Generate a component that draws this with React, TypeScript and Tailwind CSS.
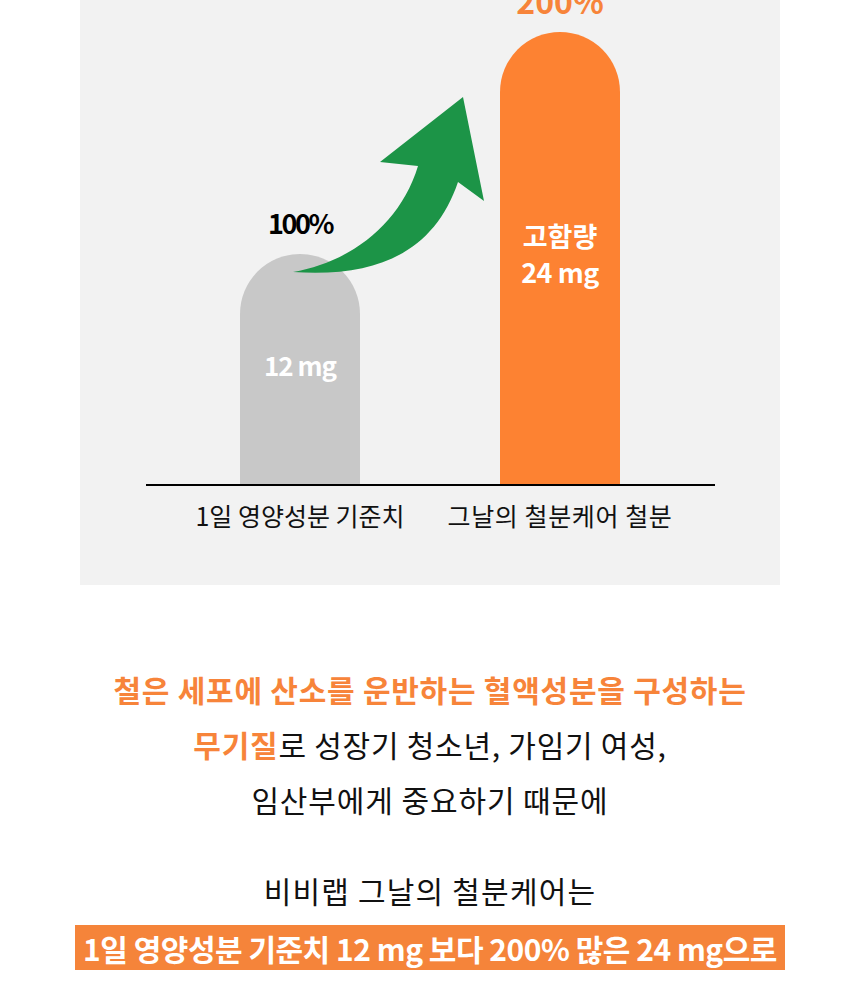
import React from 'react';

const font = "font-['Noto_Sans_CJK_KR','Noto_Sans',sans-serif]";

function Arrow() {
  return (
    <svg
      className="absolute left-0 top-0 pointer-events-none"
      width={700}
      height={585}
      viewBox="0 0 700 585"
    >
      <path
        d="M383 97 L404 201 L378 182 C355 250 300 278 213 272 C270 262 320 225 338 166 L300 162 Z"
        fill="#1c9447"
      />
    </svg>
  );
}

function Chart() {
  return (
    <div className="relative w-[700px] h-[585px] mx-auto bg-[#f2f2f2]">
      <div className="flex flex-col">
        <div className="h-[484px] flex items-end pl-[160px] gap-[140px]">
          <div className="w-[120px] flex flex-col items-center">
            <div className="text-[27px] leading-none font-bold tracking-[-2.5px] text-black mb-[18px]">100%</div>
            <div className="w-[120px] h-[230px] rounded-t-full bg-[#c8c8c8] flex flex-col items-center pt-[98px]">
              <div className="text-[26px] leading-none font-bold tracking-[-1px] text-white">12 mg</div>
            </div>
          </div>
          <div className="w-[120px] flex flex-col items-center">
            <div className="text-[32px] leading-none font-bold text-[#f7843a] mb-[16px]">200%</div>
            <div className="w-[120px] h-[452px] rounded-t-full bg-[#fd8232] flex flex-col items-center pt-[190px]">
              <div className="text-[27px] leading-none font-bold text-white">고함량</div>
              <div className="text-[27px] leading-none font-bold tracking-[-0.5px] text-white mt-[9px]">24 mg</div>
            </div>
          </div>
        </div>
        <div className="ml-[66px] w-[569px] border-t-2 border-black" />
        <div className="flex pl-[160px] gap-[140px] mt-[17px]">
          <div className="w-[120px] flex justify-center">
            <span className="whitespace-nowrap text-[25px] leading-none text-[#111]">1일 영양성분 기준치</span>
          </div>
          <div className="w-[120px] flex justify-center">
            <span className="whitespace-nowrap text-[25px] leading-none tracking-[0.6px] text-[#111]">그날의 철분케어 철분</span>
          </div>
        </div>
      </div>
      <Arrow />
    </div>
  );
}

export default function App() {
  return (
    <div className={`${font} bg-white w-[860px] min-h-[982px] overflow-hidden`}>
      <Chart />
      <div className="flex flex-col items-center text-center text-[30px] leading-[55px] text-[#111] pt-[77px]">
        <p className="font-bold text-[#f7843a] tracking-[0.75px] whitespace-nowrap">
          철은 세포에 산소를 운반하는 혈액성분을 구성하는
        </p>
        <p className="tracking-[0.75px] whitespace-nowrap">
          <span className="font-bold text-[#f7843a]">무기질</span>로 성장기 청소년, 가임기 여성,
        </p>
        <p className="tracking-[0.9px] whitespace-nowrap">임산부에게 중요하기 때문에</p>
        <p className="tracking-[1.2px] whitespace-nowrap mt-[36px]">비비랩 그날의 철분케어는</p>
        <div className="mt-[7px] w-[710px] h-[45px] bg-[#f5843a] flex items-center justify-center">
          <span className="text-[30px] leading-none font-bold tracking-[-0.5px] text-white whitespace-nowrap">
            1일 영양성분 기준치 12 mg 보다 200% 많은 24 mg으로
          </span>
        </div>
      </div>
    </div>
  );
}
